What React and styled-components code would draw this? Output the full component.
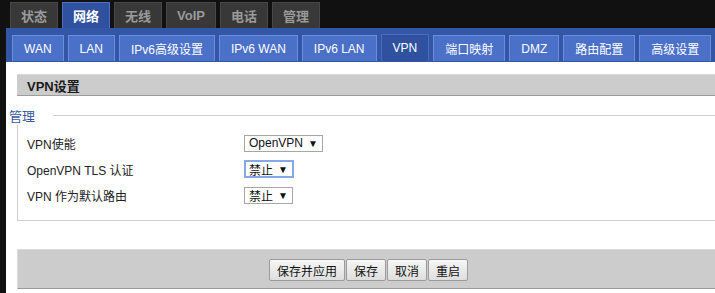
import React from 'react'
import styled, { createGlobalStyle } from 'styled-components'

const GlobalStyle = createGlobalStyle`
  html, body {
    margin: 0;
    background: #111;
    overflow: hidden;
  }
  body {
    font-family: "Liberation Sans", "Noto Sans CJK SC", sans-serif;
    font-size: 12px;
    color: #222;
  }
`

const Page = styled.div`
  width: 730px;
  padding-top: 2px;
`

const TopNav = styled.div`
  display: flex;
  gap: 4px;
  padding-left: 10px;
  height: 26px;
`

const TopTab = styled.div`
  box-sizing: border-box;
  height: 26px;
  padding: 0 10px;
  display: flex;
  align-items: center;
  font-size: 13px;
  font-weight: bold;
  color: ${p => (p.active ? '#fff' : '#9a9a9a')};
  background: ${p => (p.active ? '#2f51a0' : '#383838')};
  border: 1px solid ${p => (p.active ? '#4d70c0' : '#474747')};
  border-bottom: none;
`

const Main = styled.div`
  margin-left: 6px;
  width: 724px;
  background: #fff;
  min-height: 270px;
`

const SubNav = styled.div`
  box-sizing: border-box;
  height: 34px;
  background: #3356a6;
  display: flex;
  align-items: flex-end;
  gap: 4px;
  padding: 0 0 1px 6px;
`

const SubTab = styled.div`
  box-sizing: border-box;
  height: ${p => (p.active ? '27px' : '26px')};
  padding: 0 11px;
  display: flex;
  align-items: center;
  justify-content: center;
  font-size: 12px;
  color: #fff;
  background: ${p => (p.active ? '#2f51a0' : '#4a70c8')};
  border: 1px solid ${p => (p.active ? '#4a6cbc' : '#6a8ede')};
  border-bottom: none;
`

const Content = styled.div`
  padding: 12px 11px 0 11px;
`

const SectionHeader = styled.div`
  box-sizing: border-box;
  height: 22px;
  display: flex;
  align-items: center;
  padding-left: 10px;
  background: #cccccc;
  border-top: 1px solid #dadada;
  border-bottom: 1px solid #9c9c9c;
  font-weight: bold;
  font-size: 13px;
  color: #1a1a1a;
`

const Fieldset = styled.fieldset`
  margin: 10px 0 0 0;
  padding: 5px 0 12px 9px;
  border: 1px solid #cfcfcf;
  border-right: none;
  min-width: 0;
`

const Legend = styled.legend`
  margin-left: -18px;
  padding: 0 18px 0 0;
  font-size: 13px;
  color: #36589e;
  background: #fff;
`

const Row = styled.div`
  display: flex;
  align-items: center;
  height: 26px;
`

const Label = styled.div`
  width: 217px;
  color: #222;
  font-size: 12px;
`

const SelectBox = styled.div`
  box-sizing: border-box;
  display: inline-flex;
  align-items: center;
  gap: 5px;
  height: ${p => (p.focused ? '18px' : '17px')};
  padding: 0 4px 0 ${p => (p.focused ? '3px' : '4px')};
  border: ${p => (p.focused ? '2px solid #86a8e6' : '1px solid #a6a6a6')};
  background: #fff;
  font-size: 12px;
  color: #111;
`

const Arrow = styled.span`
  font-size: 10px;
  color: #111;
`

const ButtonBar = styled.div`
  box-sizing: border-box;
  margin-top: 28px;
  height: 40px;
  background: #cccccc;
  border-top: 1px solid #dcdcdc;
  border-left: 1px solid #dcdcdc;
  border-bottom: 1px solid #9a9a9a;
  display: flex;
  justify-content: center;
  padding-top: 9px;
  gap: 1px;
`

const Button = styled.button`
  box-sizing: border-box;
  height: 22px;
  padding: 0 7px;
  font-family: "Liberation Sans", "Noto Sans CJK SC", sans-serif;
  font-size: 12px;
  color: #111;
  background: linear-gradient(#f6f6f6, #dedede);
  border: 1px solid #9c9c9c;
  border-radius: 2px;
`

const topTabs = ['状态', '网络', '无线', 'VoIP', '电话', '管理']
const subTabs = ['WAN', 'LAN', 'IPv6高级设置', 'IPv6 WAN', 'IPv6 LAN', 'VPN', '端口映射', 'DMZ', '路由配置', '高级设置']

const rows = [
  { label: 'VPN使能', value: 'OpenVPN' },
  { label: 'OpenVPN TLS 认证', value: '禁止', focused: true },
  { label: 'VPN 作为默认路由', value: '禁止' },
]

export default function App() {
  return (
    <Page>
      <GlobalStyle />
      <TopNav>
        {topTabs.map(t => (
          <TopTab key={t} active={t === '网络'}>{t}</TopTab>
        ))}
      </TopNav>
      <Main>
        <SubNav>
          {subTabs.map(t => (
            <SubTab key={t} active={t === 'VPN'}>{t}</SubTab>
          ))}
        </SubNav>
        <Content>
          <SectionHeader>VPN设置</SectionHeader>
          <Fieldset>
            <Legend>管理</Legend>
            {rows.map(r => (
              <Row key={r.label}>
                <Label>{r.label}</Label>
                <SelectBox focused={r.focused}>
                  {r.value}<Arrow>▼</Arrow>
                </SelectBox>
              </Row>
            ))}
          </Fieldset>
          <ButtonBar>
            <Button>保存并应用</Button>
            <Button>保存</Button>
            <Button>取消</Button>
            <Button>重启</Button>
          </ButtonBar>
        </Content>
      </Main>
    </Page>
  )
}
